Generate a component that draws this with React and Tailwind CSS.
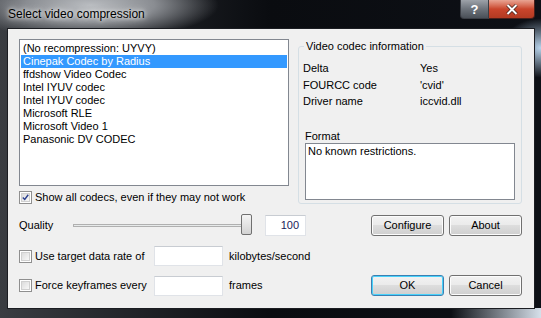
import React from 'react';

const font = { fontFamily: '"Liberation Sans", Arial, sans-serif' };

const codecs = [
  '(No recompression: UYVY)',
  'Cinepak Codec by Radius',
  'ffdshow Video Codec',
  'Intel IYUV codec',
  'Intel IYUV codec',
  'Microsoft RLE',
  'Microsoft Video 1',
  'Panasonic DV CODEC',
];

function CheckBox({ checked }) {
  return (
    <div className="w-[13px] h-[13px] shrink-0 border border-[#8f8f8f] bg-white p-[1px]">
      <div className="w-full h-full border border-[#d0d0d0] bg-gradient-to-br from-[#dcdcdc] to-[#f8f8f8] flex items-center justify-center">
        {checked && (
          <svg width="9" height="9" viewBox="0 0 9 9">
            <path d="M1 4.5 L3.5 7 L8 1" fill="none" stroke="#2a3f8e" strokeWidth="1.8" />
          </svg>
        )}
      </div>
    </div>
  );
}

function Button({ children, focused }) {
  return (
    <div
      className={`w-[73px] h-[21px] shrink-0 rounded-[3px] border flex items-center justify-center text-[11px] text-black ${
        focused ? 'border-[#3c7fb1] shadow-[inset_0_0_0_1px_#48d2fb]' : 'border-[#707070] shadow-[inset_0_0_0_1px_#fcfcfc]'
      }`}
      style={{ background: 'linear-gradient(#f2f2f2 0%, #ebebeb 45%, #dddddd 50%, #cfcfcf 100%)' }}
    >
      {children}
    </div>
  );
}

function Edit({ w, h, children }) {
  return (
    <div className={`${w} ${h} shrink-0 bg-white border border-[#e0e3e8] border-t-[#c8ccd2] flex items-center justify-end pr-[6px] text-[11px] text-[#1a1a5a]`}>
      {children}
    </div>
  );
}

export default function App() {
  return (
    <div className="w-[541px] h-[318px] relative overflow-hidden bg-[#14171c]" style={font}>
      {/* frame glass */}
      <div className="absolute inset-0 bg-gradient-to-r from-[#3a3d42] via-[#0a0c10] to-[#0d1016]" />
      <div className="absolute left-[-40px] top-[-30px] w-[260px] h-[70px] rounded-full bg-[radial-gradient(ellipse_at_center,_#b9bcc0_0%,_#8a8d92_35%,_transparent_70%)]" />
      <div className="absolute right-0 top-[18px] w-[40px] h-[60px] bg-[radial-gradient(ellipse_at_right,_#b8d4ec_0%,_transparent_70%)]" />
      <div className="absolute right-0 bottom-0 w-[90px] h-[10px] bg-gradient-to-r from-transparent to-[#d6e0ea]" />

      {/* title bar buttons */}
      <div className="absolute top-0 right-[6px] flex">
        <div className="w-[29px] h-[19px] rounded-bl-[4px] border border-[#3a3d44] border-t-0 bg-gradient-to-b from-[#9da2a9] via-[#6d737b] to-[#4a5058] flex items-center justify-center text-white font-bold text-[13px] leading-none">
          ?
        </div>
        <div className="w-[46px] h-[19px] rounded-br-[4px] border border-[#4a1f1a] border-t-0 border-l-0 bg-gradient-to-b from-[#e8a493] via-[#c9452c] to-[#b23a22] flex items-center justify-center">
          <svg width="12" height="11" viewBox="0 0 12 11">
            <path d="M1.5 1 L10.5 10 M10.5 1 L1.5 10" stroke="#3a1a14" strokeWidth="3.4" />
            <path d="M1.5 1 L10.5 10 M10.5 1 L1.5 10" stroke="#ffffff" strokeWidth="2" />
          </svg>
        </div>
      </div>

      <div className="relative flex flex-col h-full">
        {/* title */}
        <div className="h-[28px] pl-[8px] pt-[5px] text-[12px] text-black" style={{ textShadow: '0 0 8px #fff, 0 0 4px #fff' }}>
          Select video compression
        </div>

        {/* client */}
        <div className="ml-[7px] mr-[6px] h-[281px] border border-[#1b1d22] bg-[#f0f0f0] pl-[11px] pr-[12px] pt-[10px] text-[11px] text-black whitespace-nowrap">
          <div className="flex">
            {/* left column */}
            <div className="flex flex-col">
              <div className="w-[270px] h-[147px] bg-white border border-[#828790] pl-[1px] pt-[2px]">
                {codecs.map((c, i) => (
                  <div
                    key={i}
                    className={`h-[13px] leading-[13px] pl-[2px] w-[266px] ${i === 1 ? 'bg-[#3399ff] text-white' : ''}`}
                  >
                    {c}
                  </div>
                ))}
              </div>
              <div className="flex items-center gap-[3px] mt-[5px] h-[13px]">
                <CheckBox checked />
                <span>Show all codecs, even if they may not work</span>
              </div>
            </div>

            {/* right group box */}
            <div className="relative ml-[9px] mt-[7px] w-[224px] h-[158px] border border-[#d5dfe5] rounded-[3px] pl-[4px] pt-[13px]">
              <span className="absolute -top-[7px] left-[5px] px-[2px] bg-[#f0f0f0] leading-[13px]">
                Video codec information
              </span>
              {[
                ['Delta', 'Yes'],
                ['FOURCC code', "'cvid'"],
                ['Driver name', 'iccvid.dll'],
              ].map(([k, v]) => (
                <div key={k} className="flex h-[16.5px] items-center">
                  <span className="w-[117px]">{k}</span>
                  <span>{v}</span>
                </div>
              ))}
              <div className="mt-[20px] pl-[2px] leading-[13px]">Format</div>
              <div className="ml-[2px] w-[210px] h-[57px] bg-white border border-[#828790] pl-[2px] pt-[1px] leading-[13px]">
                No known restrictions.
              </div>
            </div>
          </div>

          {/* quality row */}
          <div className="flex items-center mt-[10px] h-[22px]">
            <span className="w-[54px] shrink-0">Quality</span>
            <div className="relative w-[180px] h-[22px] shrink-0">
              <div className="absolute left-[0px] right-[4px] top-[10px] h-[3px] border border-[#b0b0b0] bg-[#e7eaea]" />
              <div className="absolute left-[168px] top-0 w-[11px] h-[21px] rounded-[2px] border border-[#707070] bg-gradient-to-b from-[#f4f4f4] via-[#e4e4e4] to-[#d2d2d2]" />
            </div>
            <div className="ml-[12px]">
              <Edit w="w-[41px]" h="h-[21px]">100</Edit>
            </div>
            <div className="ml-auto flex gap-[5px]">
              <Button>Configure</Button>
              <Button>About</Button>
            </div>
          </div>

          {/* target data rate */}
          <div className="flex items-center mt-[10px] h-[20px]">
            <CheckBox />
            <span className="ml-[3px] w-[119px] shrink-0">Use target data rate of</span>
            <Edit w="w-[69px]" h="h-[20px]" />
            <span className="ml-[6px]">kilobytes/second</span>
          </div>

          {/* keyframes */}
          <div className="flex items-center mt-[9px] h-[21px]">
            <CheckBox />
            <span className="ml-[3px] w-[119px] shrink-0">Force keyframes every</span>
            <Edit w="w-[69px]" h="h-[20px]" />
            <span className="ml-[6px]">frames</span>
            <div className="ml-auto flex gap-[5px]">
              <Button focused>OK</Button>
              <Button>Cancel</Button>
            </div>
          </div>
        </div>
      </div>
    </div>
  );
}
